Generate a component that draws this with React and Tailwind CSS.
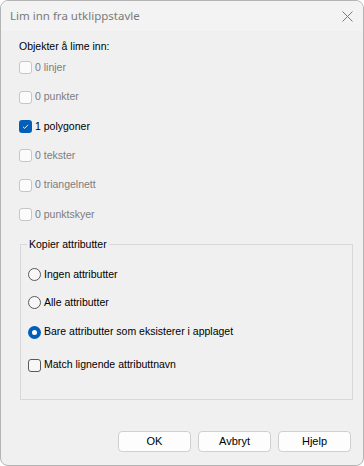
import React from 'react';

const items = [
  { label: '0 linjer', checked: false, disabled: true },
  { label: '0 punkter', checked: false, disabled: true },
  { label: '1 polygoner', checked: true, disabled: false },
  { label: '0 tekster', checked: false, disabled: true },
  { label: '0 triangelnett', checked: false, disabled: true },
  { label: '0 punktskyer', checked: false, disabled: true },
];

function CheckBox({ checked, disabled }) {
  if (checked) {
    return (
      <span className="flex h-[13px] w-[13px] items-center justify-center rounded-[3px] bg-[#005fb8]">
        <svg width="9" height="9" viewBox="0 0 9 9">
          <path d="M2 4.8 L3.7 6.4 L7 2.8" fill="none" stroke="#fff" strokeWidth="0.9" />
        </svg>
      </span>
    );
  }
  return (
    <span
      className={`h-[13px] w-[13px] rounded-[3px] border ${
        disabled ? 'border-[#c6c6c6] bg-[#fbfbfb]' : 'border-[#5a5a5a] bg-[#f7f7f7]'
      }`}
    />
  );
}

function Radio({ checked }) {
  if (checked) {
    return (
      <span className="flex h-[13px] w-[13px] items-center justify-center rounded-full bg-[#005fb8]">
        <span className="h-[5px] w-[5px] rounded-full bg-white" />
      </span>
    );
  }
  return <span className="h-[13px] w-[13px] rounded-full border border-[#5a5a5a] bg-[#f7f7f7]" />;
}

export default function App() {
  return (
    <div
      className="flex h-[466px] w-[364px] flex-col overflow-hidden rounded-[8px] border border-[#b4b4b4] bg-[#f0f0f0] text-[10.5px] text-black"
      style={{ fontFamily: '"Liberation Sans", Arial, sans-serif' }}
    >
      {/* tittellinje */}
      <div className="flex h-[30px] shrink-0 items-center justify-between bg-[#f3f3f3] pl-[9px] pr-[10px]">
        <span className="text-[11.5px] text-[#7a7a7a]" style={{ fontFamily: '"Noto Sans", sans-serif' }}>
          Lim inn fra utklippstavle
        </span>
        <svg width="11" height="11" viewBox="0 0 11 11">
          <path d="M0.5 0.5 L10.5 10.5 M10.5 0.5 L0.5 10.5" stroke="#7a7a7a" strokeWidth="1" />
        </svg>
      </div>

      <div className="flex flex-1 flex-col pl-[18px]">
        <div className="mt-[8px] flex h-[16px] items-center">Objekter å lime inn:</div>

        <div className="mt-[-2px] flex flex-col">
          {items.map((it) => (
            <div key={it.label} className="flex h-[29.4px] items-center gap-[3px]">
              <CheckBox checked={it.checked} disabled={it.disabled} />
              <span className={it.disabled ? 'text-[#7d7d7d]' : 'text-black'}>{it.label}</span>
            </div>
          ))}
        </div>

        {/* gruppeboks */}
        <div className="relative mt-[15px] ml-[1px] h-[156px] w-[333px] border border-[#d8d8d8] pl-[7px]">
          <span className="absolute top-[-8px] left-[6px] bg-[#f0f0f0] px-[2px] leading-[14px]">
            Kopier attributter
          </span>
          <div className="mt-[16px] flex flex-col">
            <div className="flex h-[27px] items-center gap-[3px]">
              <Radio />
              <span>Ingen attributter</span>
            </div>
            <div className="flex h-[29px] items-center gap-[3px]">
              <Radio />
              <span>Alle attributter</span>
            </div>
            <div className="flex h-[30px] items-center gap-[3px]">
              <Radio checked />
              <span>Bare attributter som eksisterer i applaget</span>
            </div>
            <div className="flex h-[36px] items-center gap-[3px]">
              <CheckBox />
              <span>Match lignende attributtnavn</span>
            </div>
          </div>
        </div>

        <div className="mt-auto mb-[13px] flex justify-end gap-[7px] pr-[12px]">
          {['OK', 'Avbryt', 'Hjelp'].map((b) => (
            <button
              key={b}
              className="h-[21px] w-[73px] rounded-[4px] border border-[#d0d0d0] bg-[#fdfdfd] text-[11px] text-black"
            >
              {b}
            </button>
          ))}
        </div>
      </div>
    </div>
  );
}
